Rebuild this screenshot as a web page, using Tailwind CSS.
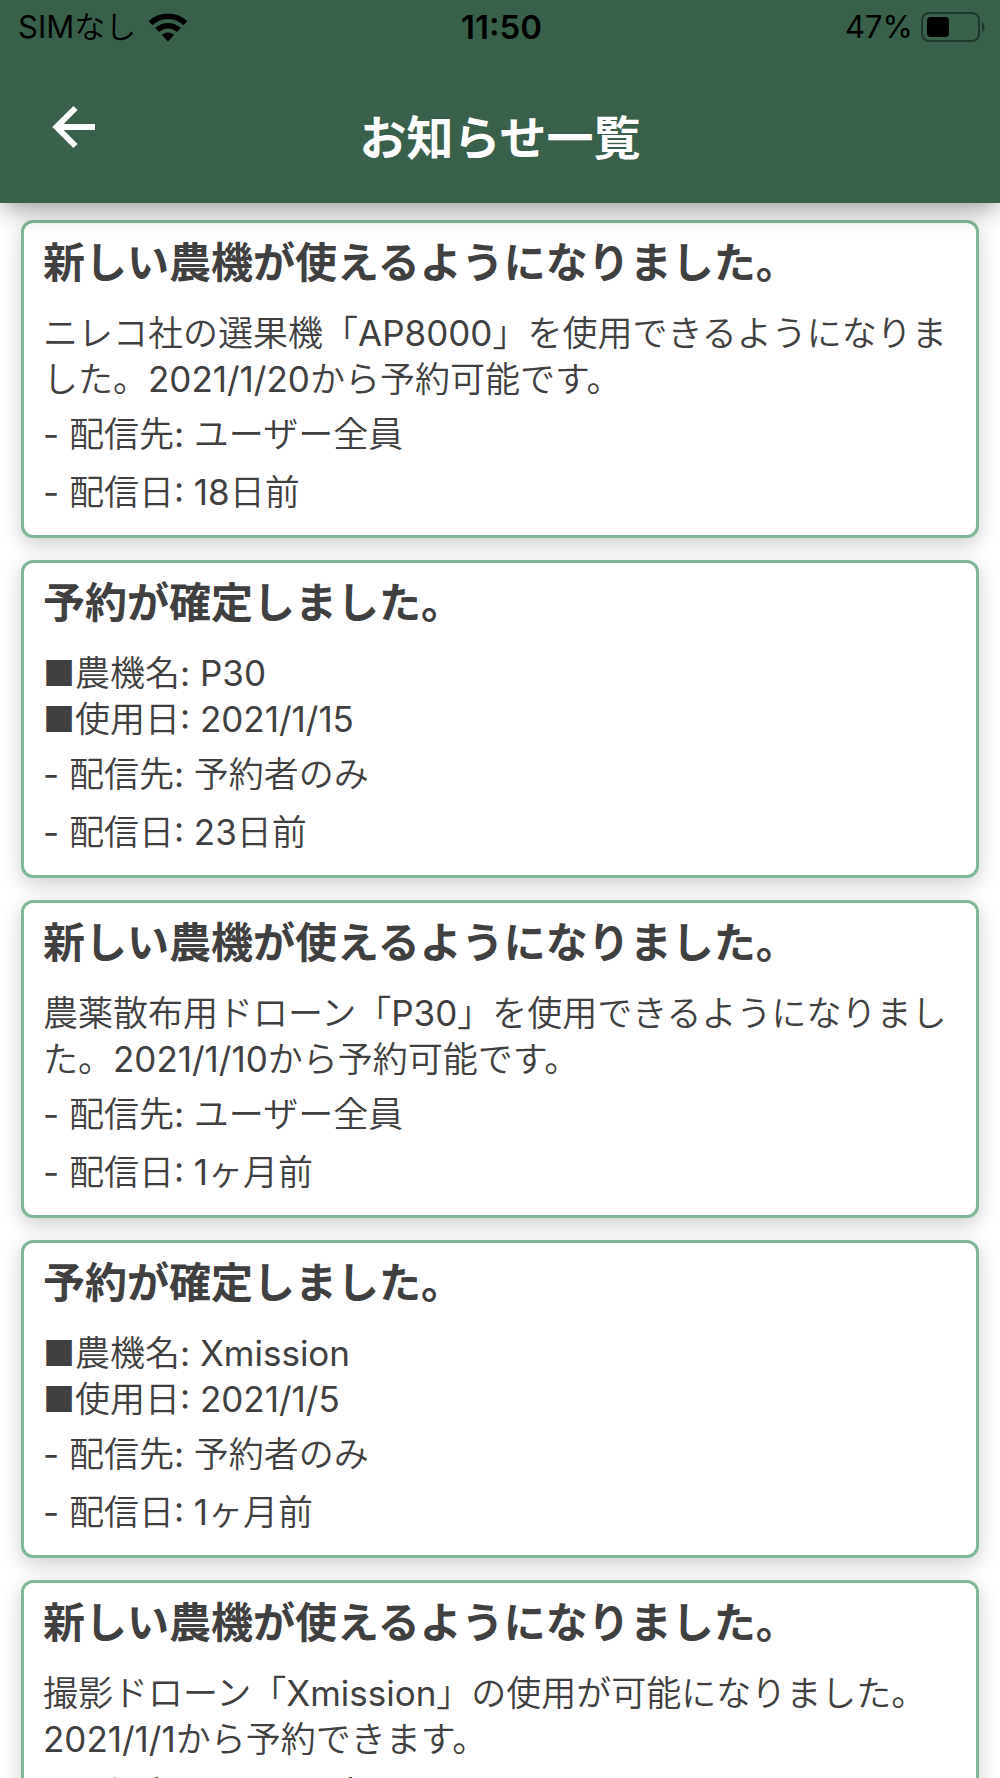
<!DOCTYPE html>
<html lang="ja">
  <head>
    <meta charset="utf-8" />
    <meta name="viewport" content="width=device-width, initial-scale=1" />
    <title>お知らせ一覧</title>
    <script src="https://cdn.jsdelivr.net/npm/@tailwindcss/browser@4"></script>
  </head>
  <body
    class="bg-white font-[Inter,'Noto_Sans_CJK_JP',sans-serif] text-[#404040] overflow-x-hidden"
  >
    <header
      class="relative z-10 bg-[#38604a] shadow-[0_10px_24px_-4px_rgba(0,0,0,0.4)]"
    >
      <div
        class="grid grid-cols-3 items-center h-[54px] pl-[18px] pr-[15px] text-[31px] leading-[54px] text-black"
      >
        <div class="flex items-center gap-3">
          <span class="font-[Inter,'Noto_Sans_CJK_JP_DemiLight','Noto_Sans_CJK_JP',sans-serif]">SIMなし</span>
          <svg class="w-[40px] h-[29px]" viewBox="0 0 40 29" aria-hidden="true">
            <path d="M20 0.500C27.500 0.500 34.500 3.300 39.300 8.300L35.300 12.300C31.200 8.200 25.800 6 20 6S8.800 8.200 4.700 12.300L0.700 8.300C5.500 3.300 12.500 0.500 20 0.500Z" />
            <path d="M20 10C25 10 29.500 11.900 32.700 15.100L28.700 19C26.400 16.700 23.300 15.500 20 15.500S13.600 16.700 11.300 19L7.300 15.100C10.500 11.900 15 10 20 10Z" />
            <path d="M20 19.500C22.400 19.500 24.500 20.400 26.100 21.900L20 28.500L13.900 21.900C15.500 20.400 17.600 19.500 20 19.500Z" />
          </svg>
        </div>
        <div class="text-center text-[33px] font-semibold">11:50</div>
        <div class="flex items-center justify-end gap-2">
          <span>47%</span>
          <svg class="w-[64px] h-[30px]" viewBox="0 0 64 30" aria-hidden="true">
            <rect x="1" y="1" width="57" height="28" rx="7" fill="none" stroke="#20382b" stroke-width="2" />
            <rect x="6" y="5" width="22" height="20" rx="4" />
            <path d="M61 10C64.500 11.500 64.500 18.500 61 20Z" fill="#20382b" />
          </svg>
        </div>
      </div>
      <div class="grid grid-cols-[100px_1fr_100px] items-start pt-[51px] h-[149px]">
        <button type="button" aria-label="戻る" class="justify-self-end mr-1">
          <svg class="w-[44px] h-[44px]" viewBox="0 0 44 44" fill="none" stroke="white" stroke-width="6" aria-hidden="true">
            <path d="M43 22H5M23.500 3L4.500 22L23.500 41" />
          </svg>
        </button>
        <h1 class="text-center text-[47px] leading-[66px] font-bold text-white">
          お知らせ一覧
        </h1>
      </div>
    </header>

    <main id="notices" class="flex flex-col gap-[22px] px-[21px] pt-[17px]"></main>

    <script>
      const newMachine = "新しい農機が使えるようになりました。";
      const reserved = "予約が確定しました。";

      const notices = [
        {
          title: newMachine,
          body: "ニレコ社の選果機「AP8000」を使用できるようになりました。2021/1/20から予約可能です。",
          target: "ユーザー全員",
          date: "18日前",
        },
        {
          title: reserved,
          body: "■農機名: P30\n■使用日: 2021/1/15",
          target: "予約者のみ",
          date: "23日前",
        },
        {
          title: newMachine,
          body: "農薬散布用ドローン「P30」を使用できるようになりました。2021/1/10から予約可能です。",
          target: "ユーザー全員",
          date: "1ヶ月前",
        },
        {
          title: reserved,
          body: "■農機名: Xmission\n■使用日: 2021/1/5",
          target: "予約者のみ",
          date: "1ヶ月前",
        },
        {
          title: newMachine,
          body: "撮影ドローン「Xmission」の使用が可能になりました。2021/1/1から予約できます。",
          target: "ユーザー全員",
          date: "1ヶ月前",
        },
      ];

      document.getElementById("notices").innerHTML = notices
        .map(
          (notice) => `<article class="bg-white border-3 border-[#7fb896] rounded-xl px-[19px] py-[14px] shadow-[0_6px_20px_rgba(0,0,0,0.2)]">
            <h2 class="text-[42px] leading-[52px] font-bold">${notice.title}</h2>
            <div class="mt-[21px] text-[35px] font-[Inter,'Noto_Sans_CJK_JP_DemiLight','Noto_Sans_CJK_JP',sans-serif]">
              <p class="leading-[46px] whitespace-pre-line">${notice.body}</p>
              <p class="mt-[3px] leading-[58px]">- 配信先: ${notice.target}</p>
              <p class="leading-[58px]">- 配信日: ${notice.date}</p>
            </div>
          </article>`
        )
        .join("\n");
    </script>
  </body>
</html>
